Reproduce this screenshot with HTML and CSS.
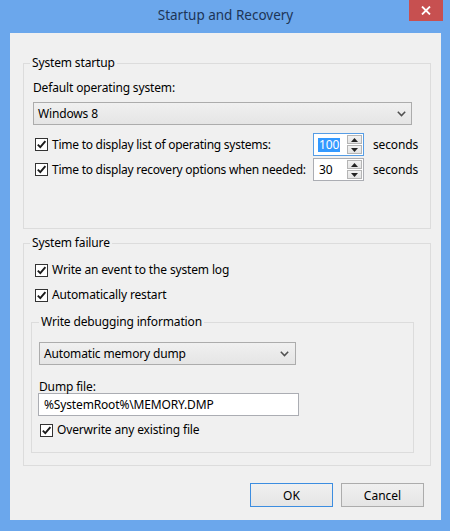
FILE: index.html
```html
<!DOCTYPE html>
<html>
<head>
<meta charset="utf-8">
<title>Startup and Recovery</title>
<link rel="stylesheet" href="styles.css">
</head>
<body>
<div class="window">
  <div class="titlebar">
    <span></span>
    <span class="title">Startup and Recovery</span>
    <span class="close"><svg width="10" height="9" viewBox="0 0 10 9"><path d="M1 0.5 L9 8.5 M9 0.5 L1 8.5" stroke="#fff" stroke-width="1.8" fill="none"/></svg></span>
  </div>
  <div class="client">
    <fieldset class="group startup">
      <legend>System startup</legend>
      <div class="label">Default operating system:</div>
      <div class="combo os"><span>Windows 8</span><svg class="chev" width="9" height="6" viewBox="0 0 9 6"><path d="M0.8 0.8 L4.5 4.6 L8.2 0.8" stroke="#505050" stroke-width="1.5" fill="none"/></svg></div>
      <div class="spin-row first">
        <div class="check"><span class="box"><svg width="11" height="11" viewBox="0 0 11 11"><path d="M1.8 5.6 L4.3 8.2 L9.4 2.2" stroke="#1a1a1a" stroke-width="1.9" fill="none"/></svg></span><span>Time to display list of operating systems:</span></div>
        <div class="spinner focused"><span class="value"><span class="sel">100</span></span><span class="arrows"><span class="btn"><svg width="7" height="4" viewBox="0 0 7 4"><path d="M0 4 L3.5 0 L7 4 Z" fill="#222"/></svg></span><span class="btn"><svg width="7" height="4" viewBox="0 0 7 4"><path d="M0 0 L3.5 4 L7 0 Z" fill="#222"/></svg></span></span></div>
        <span class="unit">seconds</span>
      </div>
      <div class="spin-row">
        <div class="check"><span class="box"><svg width="11" height="11" viewBox="0 0 11 11"><path d="M1.8 5.6 L4.3 8.2 L9.4 2.2" stroke="#1a1a1a" stroke-width="1.9" fill="none"/></svg></span><span>Time to display recovery options when needed:</span></div>
        <div class="spinner"><span class="value">30</span><span class="arrows"><span class="btn"><svg width="7" height="4" viewBox="0 0 7 4"><path d="M0 4 L3.5 0 L7 4 Z" fill="#222"/></svg></span><span class="btn"><svg width="7" height="4" viewBox="0 0 7 4"><path d="M0 0 L3.5 4 L7 0 Z" fill="#222"/></svg></span></span></div>
        <span class="unit">seconds</span>
      </div>
    </fieldset>

    <fieldset class="group failure">
      <legend>System failure</legend>
      <div class="check row"><span class="box"><svg width="11" height="11" viewBox="0 0 11 11"><path d="M1.8 5.6 L4.3 8.2 L9.4 2.2" stroke="#1a1a1a" stroke-width="1.9" fill="none"/></svg></span><span>Write an event to the system log</span></div>
      <div class="check row second"><span class="box"><svg width="11" height="11" viewBox="0 0 11 11"><path d="M1.8 5.6 L4.3 8.2 L9.4 2.2" stroke="#1a1a1a" stroke-width="1.9" fill="none"/></svg></span><span>Automatically restart</span></div>

      <fieldset class="group debug">
        <legend>Write debugging information</legend>
        <div class="combo dump"><span>Automatic memory dump</span><svg class="chev" width="9" height="6" viewBox="0 0 9 6"><path d="M0.8 0.8 L4.5 4.6 L8.2 0.8" stroke="#505050" stroke-width="1.5" fill="none"/></svg></div>
        <div class="label dump-label">Dump file:</div>
        <div class="textbox">%SystemRoot%\MEMORY.DMP</div>
        <div class="check row overwrite"><span class="box"><svg width="11" height="11" viewBox="0 0 11 11"><path d="M1.8 5.6 L4.3 8.2 L9.4 2.2" stroke="#1a1a1a" stroke-width="1.9" fill="none"/></svg></span><span>Overwrite any existing file</span></div>
      </fieldset>
    </fieldset>

    <div class="buttons">
      <button class="button default">OK</button>
      <button class="button">Cancel</button>
    </div>
  </div>
</div>
</body>
</html>
```

FILE: styles.css
```css
* { box-sizing: border-box; }
html, body { margin: 0; padding: 0; }
body {
  font-family: "Noto Sans", "Open Sans", "DejaVu Sans", sans-serif;
  font-size: 12px;
  letter-spacing: -0.15px;
  color: #000;
  background: #fff;
}
.window {
  width: 450px;
  height: 531px;
  background: #6ba7ec;
  display: flex;
  flex-direction: column;
  padding: 0 9px 11px 10px;
}
.titlebar {
  height: 33px;
  flex: none;
  display: grid;
  grid-template-columns: 1fr auto 1fr;
  align-items: start;
}
.title {
  font-size: 13.5px;
  line-height: 18px;
  margin-top: 6px;
  color: #1d3557;
  letter-spacing: 0;
}
.close {
  justify-self: end;
  margin-right: -2px;
  width: 34px;
  height: 21px;
  background: #c75050;
  display: flex;
  align-items: center;
  justify-content: center;
}
.client {
  flex: 1;
  background: #f0f0f0;
  padding: 22px 10px 0 13px;
  display: flex;
  flex-direction: column;
}
.group {
  margin: 0;
  border: 1px solid #dcdcdc;
  min-width: 0;
}
.group legend {
  padding: 0 2px;
  line-height: 16px;
  margin-left: -3px;
}
.startup {
  width: 408px;
  padding: 9px 18px 47px 9px;
}
.label {
  line-height: 16px;
  height: 16px;
}
.combo {
  height: 23px;
  border: 1px solid #acacac;
  background: linear-gradient(#f0f0f0, #e5e5e5);
  display: flex;
  align-items: center;
  justify-content: space-between;
  padding: 0 6px 0 4px;
}
.combo.os {
  width: 379px;
  margin-top: 6px;
  padding-right: 5px;
}
.chev { display: block; }
.spin-row {
  display: flex;
  align-items: center;
  height: 23px;
  margin-top: 2px;
  white-space: nowrap;
}
.spin-row > * { flex: none; }
.spin-row.first { margin-top: 8px; }
.spin-row .check { width: 280px; letter-spacing: -0.25px; }
.check {
  display: flex;
  align-items: center;
  gap: 4px;
  padding-left: 2px;
  line-height: 16px;
  white-space: nowrap;
}
.box {
  width: 13px;
  height: 13px;
  flex: none;
  border: 1px solid #333;
  background: #fff;
  display: flex;
  align-items: center;
  justify-content: center;
}
.box svg { display: block; }
.spinner {
  width: 51px;
  height: 23px;
  border: 1px solid #abadb3;
  background: #fff;
  display: flex;
}
.spinner.focused { border-color: #569de5; }
.value {
  flex: 1;
  padding-left: 5px;
  display: flex;
  align-items: center;
  line-height: 14px;
}
.sel {
  background: #3399ff;
  color: #fff;
  padding: 0 1px;
  margin-left: -1px;
}
.arrows {
  width: 17px;
  display: flex;
  flex-direction: column;
  padding: 1px;
  gap: 1px;
}
.btn {
  flex: 1;
  border: 1px solid #b5b5b5;
  background: linear-gradient(#f2f2f2, #e3e3e3);
  display: flex;
  align-items: center;
  justify-content: center;
}
.btn svg { display: block; }
.unit { margin-left: 9px; }

.failure {
  width: 408px;
  margin-top: 6px;
  padding: 11px 9px 12px 9px;
}
.row { height: 16px; }
.row.second { margin-top: 9px; }
.debug {
  width: 383px;
  margin: 11px 0 0 -2px;
  padding: 12px 7px 14px 7px;
}
.debug legend { margin-left: 0; }
.combo.dump { width: 257px; }
.dump-label {
  margin-top: 15px;
  line-height: 13px;
  height: 13px;
}
.textbox {
  margin-left: -1px;
  width: 261px;
  height: 23px;
  border: 1px solid #abadb3;
  background: #fff;
  padding-left: 5px;
  line-height: 21px;
}
.overwrite {
  margin-top: 6px;
  padding-left: 1px;
}
.buttons {
  display: flex;
  justify-content: flex-end;
  gap: 8px;
  margin-top: 17px;
  padding-right: 7px;
}
.button {
  width: 83px;
  height: 24px;
  border: 1px solid #acacac;
  background: linear-gradient(#f0f0f0, #e5e5e5);
  font: inherit;
  color: #000;
  padding: 0;
}
.button.default { border-color: #3c8de0; }
```
